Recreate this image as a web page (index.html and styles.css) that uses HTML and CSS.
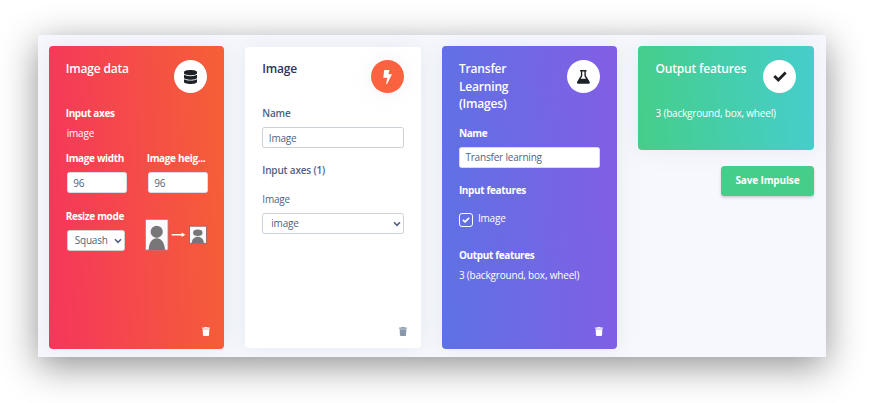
FILE: index.html
```html
<!DOCTYPE html>
<html lang="en">
<head>
<meta charset="utf-8">
<title>Impulse design</title>
<link rel="stylesheet" href="styles.css">
</head>
<body>
<svg class="defs" width="0" height="0" aria-hidden="true">
  <symbol id="trash" viewBox="0 0 448 512"><path d="M432 32H312l-9-19A24 24 0 0 0 281 0H167a24 24 0 0 0-22 13l-9 19H16A16 16 0 0 0 0 48v32a16 16 0 0 0 16 16h416a16 16 0 0 0 16-16V48a16 16 0 0 0-16-16zM53 467a48 48 0 0 0 48 45h246a48 48 0 0 0 48-45l21-339H32z"/></symbol>
  <symbol id="chevron" viewBox="0 0 8 6"><path d="M1 1.3l3 3 3-3" fill="none" stroke="currentColor" stroke-width="1.6"/></symbol>
</svg>
<main class="panel">
  <section class="card card-input">
    <header class="head"><h2>Image data</h2>
      <span class="badge"><svg width="13" height="14" viewBox="0 0 448 512" preserveAspectRatio="none"><path d="M448 73v46c0 40-100 73-224 73S0 159 0 119V73C0 33 100 0 224 0s224 33 224 73zm0 103v103c0 40-100 73-224 73S0 319 0 279V176c48 33 136 48 224 48s176-15 224-48zm0 160v103c0 40-100 73-224 73S0 479 0 439V336c48 33 136 48 224 48s176-15 224-48z"/></svg></span>
    </header>
    <h3>Input axes</h3>
    <p class="axis">image</p>
    <div class="pair">
      <div><h3>Image width</h3><input class="field" value="96" aria-label="Width"></div>
      <div><h3>Image heig...</h3><input class="field" value="96" aria-label="Height"></div>
    </div>
    <div class="resize">
      <div><h3>Resize mode</h3>
        <div class="select small"><select class="field" aria-label="Mode"><option>Squash</option></select><svg class="chev" width="8" height="6"><use href="#chevron"/></svg></div>
      </div>
      <svg class="squash" width="63" height="32" viewBox="0 0 63 32">
        <rect x=".5" y=".5" width="22.5" height="30.5" fill="#fafaff" stroke="#a8858d" stroke-width=".8"/>
        <circle cx="11.7" cy="12.8" r="6.1" fill="#777"/><path d="M3.6 31C4 23.5 7 19.3 11.7 19.3S19.5 23.5 20 31z" fill="#777"/>
        <path d="M26.7 15h10v-1.5l3.6 2.3-3.6 2.3v-1.5h-10z" fill="#fff"/>
        <rect x="44.5" y="7.2" width="17" height="17.2" fill="#fafaff" stroke="#98656a" stroke-width=".9"/>
        <ellipse cx="52.8" cy="13.8" rx="4.7" ry="3.3" fill="#777"/><path d="M46.5 24.3C47 20 49.5 17.7 52.8 17.7S58.5 20 59 24.3z" fill="#777"/>
      </svg>
    </div>
    <svg class="trash" width="8" height="9"><use href="#trash"/></svg>
  </section>

  <section class="card card-dsp">
    <header class="head"><h2>Image</h2>
      <span class="badge"><svg width="9" height="14" viewBox="0 0 9 14"><path d="M1.200 0h5.300L5.400 4.200H9L4 14h-.9l1.300-6.200H.3z"/></svg></span>
    </header>
    <h3>Name</h3>
    <input class="field" value="Image" aria-label="Block name">
    <h3 class="spaced">Input axes (1)</h3>
    <p class="select-label">Image</p>
    <div class="select"><select class="field" aria-label="Axis"><option>image</option></select><svg class="chev" width="8" height="6"><use href="#chevron"/></svg></div>
    <svg class="trash" width="8" height="9"><use href="#trash"/></svg>
  </section>

  <section class="card card-learn">
    <header class="head"><h2>Transfer<br>Learning<br>(Images)</h2>
      <span class="badge"><svg width="13" height="14" viewBox="0 0 13 14"><path fill-rule="evenodd" d="M3.100 0h6.400v1.500h-.7v4l3.700 6.100c.7 1.100.1 2.200-1.200 2.200H1.500C.2 13.800-.4 12.700.3 11.600L3.900 5.500v-4h-.8zM5.300 1.500v4.400L3.700 8.700H9L7.400 5.900V1.500z"/></svg></span>
    </header>
    <h3>Name</h3>
    <input class="field" value="Transfer learning" aria-label="Block name">
    <h3 class="spaced">Input features</h3>
    <label class="check"><span class="box"><svg width="8" height="6" viewBox="0 0 8 6"><path d="M.9 2.900l2.100 2L7.100.9" fill="none" stroke="#fff" stroke-width="1.7"/></svg></span>Image</label>
    <h3>Output features</h3>
    <p class="result">3 (background, box, wheel)</p>
    <svg class="trash" width="8" height="9"><use href="#trash"/></svg>
  </section>

  <div class="last">
    <section class="card card-output">
      <header class="head"><h2>Output features</h2>
        <span class="badge"><svg width="14" height="11" viewBox="0 0 14 11"><path d="M1.300 5l4 4L12.700 1.400" fill="none" stroke="#1e2226" stroke-width="2.800"/></svg></span>
      </header>
      <p>3 (background, box, wheel)</p>
    </section>
    <button class="save">Save Impulse</button>
  </div>
</main>
</body>
</html>
```
FILE: styles.css
```css
* { box-sizing: border-box; }
body {
  margin: 0;
  height: 403px;
  padding: 35px 44px 46px 38px;
  overflow: hidden;
  background: #fff;
  color: #525f7f;
  font: 500 10px/15px "Open Sans", sans-serif;
  letter-spacing: -.19px;
}
.defs { position: absolute; }
h2, h3, p { margin: 0; }
.panel {
  width: 788px;
  height: 322px;
  padding: 10.5px 12px 8px 10.7px;
  display: grid;
  grid-template-columns: repeat(4, 175.5px);
  column-gap: 21.1px;
  background: #f7f8fe;
  box-shadow: 0 9px 35px rgba(0, 0, 0, .43);
}
.card {
  display: flex;
  flex-direction: column;
  padding: 14.5px 17.5px 13px 17px;
  border-radius: 4px;
  color: #fff;
  box-shadow: 0 0 22px rgba(136, 152, 170, .15);
}
.card-input { background: linear-gradient(87deg, #f5365c, #f56036); }
.card-dsp { margin: 1px 0; padding-top: 13.5px; padding-right: 17px; padding-bottom: 12px; background: #fff; color: #525f7f; }
.card-learn { background: linear-gradient(87deg, #5e72e4, #825ee4); }
.card-output { height: 104.5px; background: linear-gradient(87deg, #45ce89, #45cecc); }
.head {
  display: flex;
  justify-content: space-between;
  align-items: flex-start;
  min-height: 46px;
}
.card-learn .head { margin-bottom: 12.4px; }
h2 { font-size: 12px; line-height: 17.7px; font-weight: 600; letter-spacing: -.17px; }
.card-dsp h2 { color: #32325d; }
h3 { font-size: 10px; line-height: 15px; font-weight: 700; letter-spacing: -.35px; white-space: nowrap; }
.card-dsp h3 { font-weight: 600; letter-spacing: -.17px; }
.badge {
  width: 33px;
  height: 33px;
  border-radius: 50%;
  display: flex;
  align-items: center;
  justify-content: center;
  background: #fff;
  fill: #1e2226;
}
.card-dsp .badge { background: #fb6340; fill: #fff; box-shadow: 0 0 22px rgba(136, 152, 170, .1); }
.axis { margin: 5px 0 10px 1px; }
.field {
  display: block;
  width: 100%;
  height: 21px;
  margin: 0;
  padding: 0 5.5px;
  appearance: none;
  border: 1px solid #cad1d7;
  border-radius: 2.5px;
  background: #fff;
  color: #525f7f;
  font: 500 10px "Open Sans", sans-serif;
  letter-spacing: -.19px;
}
h3 + .field { margin-top: 6px; }
.pair { display: grid; grid-template-columns: 60px 60px; column-gap: 21px; }
.pair .field { margin-left: 1px; }
.pair .field, .card-learn .field { border-color: #d9dbe8; }
.resize { display: flex; justify-content: space-between; margin-top: 15.5px; }
.squash { margin: 10px -1px 0 0; }
.select { position: relative; color: #525f7f; }
.select .field { padding-left: 8px; }
.select.small { width: 58px; margin: 6px 0 0 1px; }
.select.small .field { padding-left: 7px; }
.chev { position: absolute; right: 3px; top: 8px; }
.spaced { margin-top: 15px; }
.select-label { margin: 13.5px 0 6px; }
.check { display: flex; gap: 5px; height: 21px; margin: 15.1px 0 14.5px; line-height: 11px; }
.box {
  width: 14px;
  height: 14px;
  border: 1px solid #fff;
  border-radius: 3px;
  display: flex;
  align-items: center;
  justify-content: center;
}
.result { margin-top: 5px; }
.trash { margin: auto -3px 0 auto; fill: currentColor; }
.card-dsp .trash { color: #8898aa; }
.save {
  display: block;
  width: 93px;
  height: 29.5px;
  margin: 16px 0 0 auto;
  padding: 0 0 2px;
  border: 0;
  border-radius: 3.5px;
  background: #45ce89;
  color: #fff;
  font: 700 10px "Open Sans", sans-serif;
  letter-spacing: -.15px;
  box-shadow: 0 2px 3px rgba(50, 50, 93, .14), 0 1px 2px rgba(0, 0, 0, .09);
}
```
